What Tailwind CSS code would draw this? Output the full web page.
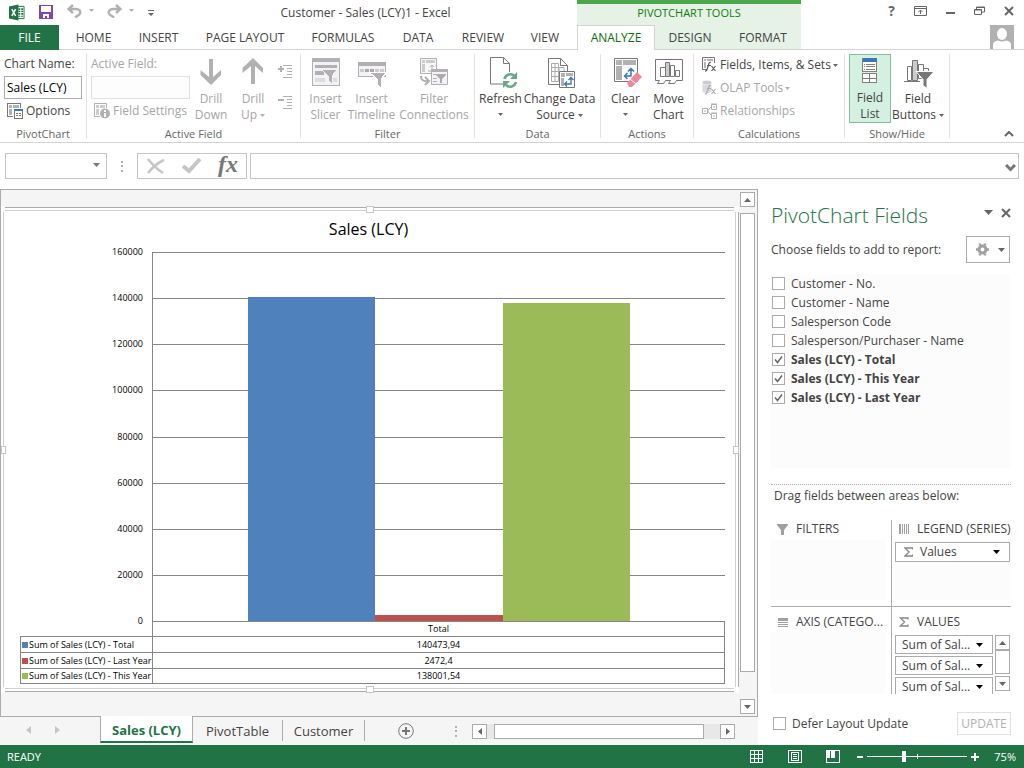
<!DOCTYPE html>
<html lang="en">
<head>
    <meta charset="UTF-8">
    <meta name="viewport" content="width=device-width, initial-scale=1.0">
    <title>Customer - Sales (LCY)1 - Excel</title>
    <script src="https://cdn.jsdelivr.net/npm/@tailwindcss/browser@4"></script>
</head>
<body class="flex h-screen min-h-[600px] flex-col overflow-hidden bg-white font-['Open_Sans','Noto_Sans',sans-serif] text-xs leading-4 text-[#444444]">

    <!-- Title bar and ribbon tabs -->
    <header class="flex h-[50px] shrink-0">
        <div class="flex flex-1 flex-col">
            <div class="flex h-[25px] items-center">
                <div class="flex w-[154px] items-center">
                    <svg class="ml-[9px]" width="17" height="17" viewBox="0 0 17 17">
                        <path d="M9 2h7v13H9z" fill="#fff" stroke="#217346"/>
                        <path d="M10 4h2v2h-2zM13 4h2v2h-2zM10 7h2v1h-2zM13 7h2v1h-2zM10 9h2v2h-2zM13 9h2v2h-2zM10 12h2v1h-2zM13 12h2v1h-2z" fill="#217346"/>
                        <path d="M0 2l10-2v17L0 15z" fill="#217346"/>
                        <path d="M3 5l4 7M7 5l-4 7" stroke="#fff" stroke-width="1.6"/>
                    </svg>
                    <button class="ml-[14px] pb-[2px]" aria-label="Save">
                        <svg class="block" width="14" height="14" viewBox="0 0 14 14" shape-rendering="crispEdges"><path d="M0 0h14v14H0z" fill="#8048a8"/><path d="M2 1h10v6H2zM4 9h6v4H8v-2H6v2H4z" fill="#fff"/></svg>
                    </button>
                    <button class="ml-[14px] flex items-center gap-[7px] pb-[4px]" aria-label="Undo">
                        <svg width="15" height="14" viewBox="0 0 15 14" fill="none" stroke="#b1b1b1" stroke-width="2.400"><path d="M6 1L1.500 5 6 9M2 5h7c3 0 5 2 4 4.500-1 2-3 2.500-5 4"/></svg>
                        <svg width="5" height="3"><path d="M0 0h5L2.500 3z" fill="#b1b1b1"/></svg>
                    </button>
                    <button class="ml-[13px] flex items-center gap-[7px] pb-[4px]" aria-label="Redo">
                        <svg width="15" height="14" viewBox="0 0 15 14" fill="none" stroke="#b1b1b1" stroke-width="2.400"><path d="M9 1l4.500 4L9 9M13 5H6C3 5 1 7 2 9.500c1 2 3 2.500 5 4"/></svg>
                        <svg width="5" height="3"><path d="M0 0h5L2.500 3z" fill="#b1b1b1"/></svg>
                    </button>
                    <button class="ml-[14px]" aria-label="Customize Quick Access Toolbar">
                        <svg class="block" width="6" height="6"><path d="M0 0h6v1H0zM0 3h6L3 6z" fill="#666"/></svg>
                    </button>
                </div>
                <h1 class="flex-1 text-center">Customer - Sales (LCY)1 - Excel</h1>
            </div>
            <nav class="flex h-[25px] items-center border-b border-[#d4d4d4]">
                <button class="h-[25px] w-[59px] bg-[#217346] pt-px text-white">FILE</button>
                <button class="w-[69px] pt-[2px]">HOME</button>
                <button class="w-[61px] pt-[2px]">INSERT</button>
                <button class="w-[112px] pt-[2px]">PAGE LAYOUT</button>
                <button class="w-[84px] pt-[2px]">FORMULAS</button>
                <button class="w-[66px] pt-[2px]">DATA</button>
                <button class="w-[64px] pt-[2px]">REVIEW</button>
                <button class="w-[60px] pt-[2px]">VIEW</button>
            </nav>
        </div>
        <div class="w-[224px] border-t-[4px] border-[#4ca64c] bg-[#e6f2e6]">
            <div class="flex h-[21px] items-center justify-center pb-[3px] text-[11px] text-[#0b7e0b]">PIVOTCHART TOOLS</div>
            <nav class="flex h-[25px] items-center">
                <button class="h-[25px] w-[78px] border-x border-t border-[#d4d4d4] bg-white text-[#0b6e0b]">ANALYZE</button>
                <div class="flex h-[25px] flex-1 border-b border-[#d4d4d4]">
                    <button class="w-[70px] pt-[2px]">DESIGN</button>
                    <button class="flex-1 pt-[2px]">FORMAT</button>
                </div>
            </nav>
        </div>
        <div class="flex w-[223px] flex-col border-b border-[#d4d4d4]">
            <div class="flex h-[25px] items-center justify-end gap-[19px] pr-[10px] pb-[3px]">
                <button class="text-sm font-bold text-[#666666]">?</button>
                <button aria-label="Ribbon display options"><svg class="block" width="13" height="10" viewBox="0 0 13 10" fill="none" stroke="#666"><path d="M.5.5h12v9H.5zM0 2.500h13M6.500 8V4.500M4.500 6l2-2 2 2"/></svg></button>
                <button aria-label="Minimize"><svg class="block" width="9" height="10"><path d="M0 6h9v2H0z" fill="#666"/></svg></button>
                <button aria-label="Restore"><svg class="block" width="11" height="10" viewBox="0 0 11 10" fill="none" stroke="#666"><path d="M.5 3.500h7v5h-7zM0 4h8M2.500 3V1h8v5H8M2.500 1.500h8"/></svg></button>
                <button aria-label="Close"><svg class="block" width="10" height="10" viewBox="0 0 10 10" stroke="#666" stroke-width="2"><path d="M1 1l8 8M9 1L1 9"/></svg></button>
            </div>
            <button class="mr-[10px] self-end" aria-label="Account">
                <svg width="24" height="24" viewBox="0 0 24 24"><path d="M0 0h24v24H0z" fill="#b1b1b1"/><ellipse cx="12" cy="9" rx="5" ry="6" fill="#fff"/><path d="M3 24v-4q0-4 5-4.500 4 2 8 0 5 .5 5 4.500v4z" fill="#fff"/></svg>
            </button>
        </div>
    </header>

    <!-- Ribbon -->
    <section class="flex h-[93px] shrink-0 border-b border-[#d4d4d4] pt-[4px] pb-[4px]">
        <div class="flex w-[87px] flex-col border-r border-[#e1e1e1]">
            <div class="flex flex-1 flex-col px-[4px]">
                <label for="chartName" class="pt-[2px]">Chart Name:</label>
                <input id="chartName" type="text" value="Sales (LCY)" class="mt-[4px] h-[23px] w-[78px] border border-[#ababab] px-[2px] text-black">
                <button class="mt-[4px] flex items-center gap-[3px] pl-[3px]">
                    <svg width="16" height="16" viewBox="0 0 16 16" shape-rendering="crispEdges"><path d="M.5 13.500V.5h13V5M0 13.500h6" fill="none" stroke="#777"/><path d="M2 2h3v3H2zM6 2h6v3H6zM2 6h3v6H2z" fill="#b1b1b1"/><path d="M7.500 6.500h8v9h-8z" fill="#fff" stroke="#777"/><path d="M7 6h9v2H7z" fill="#3a78b5"/><path d="M9 10h2v1H9zM12 10h2v1h-2zM9 12h2v1H9zM12 12h2v1h-2z" fill="#777"/></svg>
                    Options
                </button>
            </div>
            <div class="text-center text-[11px] leading-2 text-[#666666]">PivotChart</div>
        </div>

        <div class="flex w-[214px] flex-col border-r border-[#e1e1e1] text-[#a6a6a6]">
            <div class="flex flex-1">
                <div class="flex w-[103px] shrink-0 flex-col pl-[4px]">
                    <label for="activeField" class="pt-[2px]">Active Field:</label>
                    <input id="activeField" type="text" disabled class="mt-[4px] h-[23px] w-[99px] border border-[#e1e1e1] bg-[#fdfdfd]">
                    <button class="mt-[4px] flex items-center gap-[3px] pl-[3px] whitespace-nowrap">
                        <svg class="shrink-0" width="16" height="16" viewBox="0 0 16 16"><path d="M.5 13.500V.5h12V5M0 13.500h6" fill="none" stroke="#b1b1b1"/><path d="M2 2h3v3H2zM6 2h5v3H6zM2 6h3v6H2z" fill="#ccc"/><circle cx="11" cy="10.500" r="5" fill="#b1b1b1"/><path d="M10 7h2v2h-2zM10 10h2v4h-2z" fill="#fff"/></svg>
                        Field Settings
                    </button>
                </div>
                <button class="flex w-[42px] flex-col items-center pt-[3px]">
                    <svg width="32" height="32" viewBox="0 0 32 32"><path d="M14 2h4v18l8-7v5L16 28 5.500 18v-5l8.500 7z" fill="#b1b1b1"/></svg>
                    <span class="mt-[2px] text-center">Drill<br>Down</span>
                </button>
                <button class="flex w-[42px] flex-col items-center pt-[3px]">
                    <svg width="32" height="32" viewBox="0 0 32 32"><path d="M14 27h4V9l8 7v-5L16 1 5.500 11v5L14 9z" fill="#b1b1b1"/></svg>
                    <span class="mt-[2px] text-center">Drill<br>Up<svg class="ml-[3px] inline-block align-middle" width="5" height="3"><path d="M0 0h5L2.500 3z" fill="#b1b1b1"/></svg></span>
                </button>
                <div class="flex flex-col gap-[17px] pt-[11px] pl-[4px]">
                    <button aria-label="Expand Field"><svg class="block" width="15" height="14" viewBox="0 0 15 14" stroke="#b1b1b1" shape-rendering="crispEdges"><path d="M5 .5h9M9 3.500h5M9 6.500h5M9 9.500h5M5 12.500h9" stroke-width="1"/><path d="M0 4h6M3 1v6" stroke-width="2"/></svg></button>
                    <button aria-label="Collapse Field"><svg class="block" width="15" height="14" viewBox="0 0 15 14" stroke="#b1b1b1" shape-rendering="crispEdges"><path d="M5 .5h9M9 3.500h5M9 6.500h5M9 9.500h5M5 12.500h9"/><path d="M0 4h6" stroke-width="2"/></svg></button>
                </div>
            </div>
            <div class="text-center text-[11px] leading-2 text-[#666666]">Active Field</div>
        </div>

        <div class="flex w-[174px] flex-col border-r border-[#e1e1e1] text-[#a6a6a6]">
            <div class="flex flex-1">
                <button class="flex w-[47px] flex-col items-center pt-[3px] pl-[2px]">
                    <svg width="32" height="32" viewBox="0 0 32 32" shape-rendering="crispEdges"><path d="M2.500 1.500h27v27h-27z" fill="#f5f2f7" stroke="#b1b1b1"/><path d="M2 1h28v4H2z" fill="#b1b1b1"/><path d="M5 8h22v3H5zM5 14h9v4H5z" fill="#b1b1b1"/><path d="M5 21h10v4H5zM22 21h5v4h-5z" fill="#ddd"/><path d="M11 12h17l-6 7v8l-4-3v-5z" fill="#b1b1b1" stroke="#f5f2f7"/></svg>
                    <span class="mt-[2px] text-center">Insert<br>Slicer</span>
                </button>
                <button class="flex w-[47px] flex-col items-center pt-[3px]">
                    <svg width="32" height="32" viewBox="0 0 32 32" shape-rendering="crispEdges"><path d="M2.500 5.500h27v14h-27z" fill="#f5f2f7" stroke="#b1b1b1"/><path d="M2 5h28v4H2z" fill="#b1b1b1"/><path d="M4 12h4v3H4zM19 12h4v3h-4zM24 12h4v3h-4z" fill="#ccc"/><path d="M9 12h4v3H9zM14 12h4v3h-4z" fill="#aaa"/><path d="M13 15h18l-6 7v9l-4-3v-6z" fill="#b1b1b1" stroke="#fff"/></svg>
                    <span class="mt-[2px] text-center">Insert<br>Timeline</span>
                </button>
                <button class="flex w-[78px] flex-col items-center pt-[3px]">
                    <svg width="32" height="32" viewBox="0 0 32 32"><path d="M2.500 1.500h16v15h-16z" fill="#f8f6f9" stroke="#b1b1b1"/><path d="M4 3h3v3H4zM8 3h9v3H8zM4 7h3v8H4z" fill="#ccc"/><path d="M10 14h4V8M12 10l2-2 2 2" fill="none" stroke="#b1b1b1"/><path d="M13.500 12.500h16v15h-16z" fill="#f5f2f7" stroke="#b1b1b1"/><path d="M13 12h17v3H13zM15 17h13v1H15zM15 21h4v1h-4zM15 24h4v1h-4z" fill="#b1b1b1"/><path d="M18 18h10l-4 4v4h-2v-4z" fill="#aaa"/><path d="M3 19q0 6 7 5M7 20l4 4-4 4" fill="none" stroke="#b1b1b1" stroke-width="2"/></svg>
                    <span class="mt-[2px] text-center">Filter<br>Connections</span>
                </button>
            </div>
            <div class="text-center text-[11px] leading-2 text-[#666666]">Filter</div>
        </div>

        <div class="flex w-[126px] flex-col border-r border-[#e1e1e1]">
            <div class="flex flex-1 pl-[4px]">
                <button class="flex w-[43px] flex-col items-center pt-[3px]">
                    <svg width="32" height="32" viewBox="0 0 32 32"><path d="M5.500.5h13l6 6v20.500h-19z" fill="#fff" stroke="#777"/><path d="M18.500.5v6h6" fill="none" stroke="#777"/><circle cx="25" cy="23" r="8" fill="#fff"/><path d="M19.500 22a6 6 0 0 1 10-3M31 25a6 6 0 0 1-10 3" fill="none" stroke="#6aa88a" stroke-width="2.600"/><path d="M32 15v7h-7zM18 31v-7h7z" fill="#6aa88a"/></svg>
                    <span class="mt-[2px] flex flex-col items-center">Refresh<svg class="mt-[6px]" width="5" height="3"><path d="M0 0h5L2.500 3z" fill="#666"/></svg></span>
                </button>
                <button class="flex flex-1 flex-col items-center pt-[3px] pr-[3px]">
                    <svg width="32" height="32" viewBox="0 0 32 32"><path d="M4.500 1.500h12l7 7v19h-19z" fill="#fff" stroke="#777"/><path d="M16.500 1.500v7h7" fill="none" stroke="#777"/><path d="M7.500 6.500h7v18h-7zM11 6v18M15 10.500h5v14h-5zM7 10.500h13M7 14.500h13M7 19.500h13" fill="none" stroke="#aaa"/><path d="M15.500 14.500h15v16h-15z" fill="#fff" stroke="#777"/><path d="M17 16h4v4h-4zM22 16h7v3h-7zM17 21h3v8h-3z" fill="#b1b1b1"/><path d="M21 27h6v-6M23 24.500L20.500 27l2.500 2.500M24.500 23l2.500-2.500 2.500 2.500" fill="none" stroke="#3a78b5" stroke-width="1.300"/></svg>
                    <span class="mt-[2px] text-center whitespace-nowrap">Change Data<br>Source<svg class="ml-[3px] inline-block align-middle" width="5" height="3"><path d="M0 0h5L2.500 3z" fill="#666"/></svg></span>
                </button>
            </div>
            <div class="text-center text-[11px] leading-2 text-[#666666]">Data</div>
        </div>

        <div class="flex w-[93px] flex-col border-r border-[#e1e1e1]">
            <div class="flex flex-1 pl-[3px]">
                <button class="flex w-[43px] flex-col items-center pt-[3px]">
                    <svg width="32" height="32" viewBox="0 0 32 32"><path d="M4.500 1.500h23v23h-23z" fill="#fff" stroke="#777"/><path d="M6 3h6v5H6zM13 3h13v5H13zM6 9h6v14H6z" fill="#b1b1b1"/><path d="M15 19h6v-7M17.500 16L14.500 19l3 3M18 14.500l3-3 3 3" fill="none" stroke="#3a78b5" stroke-width="1.500"/><path d="M17 26L27 15l5 5-10 10h-3z" fill="#e88a9c"/><path d="M20 22l6 5" stroke="#fff"/></svg>
                    <span class="mt-[2px] flex flex-col items-center">Clear<svg class="mt-[6px]" width="5" height="3"><path d="M0 0h5L2.500 3z" fill="#666"/></svg></span>
                </button>
                <button class="flex w-[43px] flex-col items-center pt-[3px]">
                    <svg width="32" height="32" viewBox="0 0 32 32"><path d="M2.500 2.500h27v21h-6l-2 3h-6l2-3h-5l-2 3h-6l2-3h-4z" fill="#fff" stroke="#777"/><path d="M7.500 10.500h5v9h-5zM17.500 8.500h4v11h-4zM22.500 13.500h4v6h-4z" fill="#fff" stroke="#777"/><path d="M12.500 5.500h4v14h-4z" fill="#ccc" stroke="#777"/></svg>
                    <span class="mt-[2px] text-center">Move<br>Chart</span>
                </button>
            </div>
            <div class="text-center text-[11px] leading-2 text-[#666666]">Actions</div>
        </div>

        <div class="flex w-[151px] flex-col border-r border-[#e1e1e1]">
            <div class="flex flex-1 flex-col gap-[7px] pt-[3px] pl-[8px]">
                <button class="flex items-center gap-[2px] whitespace-nowrap">
                    <svg class="shrink-0" width="16" height="16" viewBox="0 0 16 16"><path d="M.5 12.500V.5h12V6M0 12.500h5" fill="none" stroke="#777"/><path d="M2 2h2v2H2zM5 2h6v2H5zM2 5h2v6H2z" fill="#b1b1b1"/><path d="M9 5.500c-2-1-2 1-3 4s-1 5-3 4.500M5 8.500h4M9.500 9l4 5M13.500 9l-4 5" fill="none" stroke="#555" stroke-width="1.200"/></svg>
                    Fields, Items, &amp; Sets<svg width="5" height="3"><path d="M0 0h5L2.500 3z" fill="#666"/></svg>
                </button>
                <button class="flex items-center gap-[2px] text-[#a6a6a6]">
                    <svg class="shrink-0" width="16" height="16" viewBox="0 0 16 16"><ellipse cx="5" cy="2.500" rx="4.500" ry="2" fill="#ccc"/><path d="M.5 4q4.500 2 9 0v8q-4.500 2-9 0z" fill="#ddd8e0"/><path d="M9 5.500c-2-1-2 1-3 4s-1 5-3 4.500M5 8.500h4M9.500 9l4 5M13.500 9l-4 5" fill="none" stroke="#aaa" stroke-width="1.200"/></svg>
                    OLAP Tools<svg width="5" height="3"><path d="M0 0h5L2.500 3z" fill="#b1b1b1"/></svg>
                </button>
                <button class="flex items-center gap-[2px] text-[#a6a6a6]">
                    <svg class="shrink-0" width="16" height="16" viewBox="0 0 16 16" fill="none" stroke="#b1b1b1"><path d="M.5 5.500h5v5h-5zM9.500 1.500h5v5h-5zM9.500 10.500h5v5h-5zM5.500 8L9 4M5.500 8L9 12M2 8h2M11 4h2M11 13h2M9 1h6M9 10h6"/></svg>
                    Relationships
                </button>
            </div>
            <div class="text-center text-[11px] leading-2 text-[#666666]">Calculations</div>
        </div>

        <div class="flex w-[105px] flex-col border-r border-[#e1e1e1]">
            <div class="flex flex-1 pl-[4px]">
                <button class="flex h-[69px] w-[42px] shrink-0 flex-col items-center border border-[#86bfa0] bg-[#d3f0e0] pt-[2px]">
                    <svg width="32" height="32" viewBox="0 0 32 32" shape-rendering="crispEdges"><path d="M8.500 1.500h14v14h-14z" fill="#fff" stroke="#777"/><path d="M8 1h15v4H8z" fill="#3a78b5"/><path d="M10 7.500h1M12 7.500h9M10 10.500h1M12 10.500h9M10 13.500h1M12 13.500h9" stroke="#777"/><path d="M8.500 17.500h7v5h-7zM15.500 17.500h7v5h-7zM8.500 22.500h7v5h-7zM15.500 22.500h7v5h-7z" fill="#fff" stroke="#777"/></svg>
                    <span class="mt-[3px] text-center">Field<br>List</span>
                </button>
                <button class="flex flex-1 flex-col items-center pt-[3px] pr-[4px]">
                    <svg width="32" height="32" viewBox="0 0 32 32"><path d="M5.500 9.500h4v14h-4zM16.500 7.500h5v14h-5zM21.500 11.500h5v8h-5z" fill="#fff" stroke="#777"/><path d="M10.500 3.500h5v20h-5z" fill="#ccc" stroke="#777"/><path d="M2 24.500h16" stroke="#777"/><path d="M14 14.500h18l-7 8v9l-4-3v-6z" fill="#777" stroke="#fff"/></svg>
                    <span class="mt-[2px] text-center whitespace-nowrap">Field<br>Buttons<svg class="ml-[3px] inline-block align-middle" width="5" height="3"><path d="M0 0h5L2.500 3z" fill="#666"/></svg></span>
                </button>
            </div>
            <div class="text-center text-[11px] leading-2 text-[#666666]">Show/Hide</div>
        </div>
        <div class="flex flex-1 items-end justify-end pr-[10px] pb-[1px]">
            <button aria-label="Collapse the Ribbon"><svg class="block" width="10" height="6" viewBox="0 0 10 6" fill="none" stroke="#666" stroke-width="2"><path d="M1 5l4-4 4 4"/></svg></button>
        </div>
    </section>

    <!-- Formula bar -->
    <section class="flex h-[46px] shrink-0 items-start pt-[10px] pr-[5px] pl-[5px]">
        <div class="relative">
            <select aria-label="Name Box" class="block h-[26px] w-[102px] appearance-none border border-[#c6c6c6] bg-white"><option></option></select>
            <svg class="pointer-events-none absolute top-[10px] right-[7px]" width="7" height="4"><path d="M0 0h7L3.500 4z" fill="#777"/></svg>
        </div>
        <div class="flex h-[26px] w-[30px] items-center justify-center"><svg width="2" height="11"><path d="M0 0h2v2H0zM0 4h2v2H0zM0 9h2v2H0z" fill="#b1b1b1"/></svg></div>
        <div class="flex h-[26px] w-[110px] items-center justify-between border border-[#c6c6c6] pr-[8px] pl-[9px]">
            <button aria-label="Cancel"><svg class="block" width="18" height="17" viewBox="0 0 18 17" fill="none" stroke="#c6c6c6" stroke-width="2.500"><path d="M1 1q6 8 15 14M17 2Q8 6 1 15"/></svg></button>
            <button aria-label="Enter"><svg class="block" width="19" height="16" viewBox="0 0 19 16" fill="none" stroke="#c6c6c6" stroke-width="4"><path d="M1 8l6 5L18 1"/></svg></button>
            <button class="pb-[5px] font-['Liberation_Serif',serif] text-2xl leading-5 font-bold text-[#777777] italic" aria-label="Insert Function">fx</button>
        </div>
        <div class="relative ml-[3px] flex-1">
            <input type="text" aria-label="Formula Bar" class="block h-[26px] w-full border border-[#c6c6c6] px-2">
            <svg class="pointer-events-none absolute top-[11px] right-[3px]" width="11" height="8" viewBox="0 0 11 8" fill="none" stroke="#777" stroke-width="3"><path d="M1 1l4.500 4.500L10 1"/></svg>
        </div>
    </section>

    <main class="flex min-h-0 flex-1">
        <!-- Worksheet -->
        <div class="flex min-w-0 flex-1 flex-col bg-[#f5f5f5]">
            <div class="flex min-h-0 flex-1 border border-[#ababab]">
                <div class="flex min-w-0 flex-1 flex-col pt-[17px] pb-[24px]">
                    <div class="relative flex flex-1 border-y border-r border-[#ababab] bg-white p-[2px]">
                        <div class="flex flex-1 flex-col border border-[#d0d0d0] pr-[10px] pb-[4px] pl-[16px] text-[9px] text-black">
                            <h2 class="pt-[8px] pr-[8px] text-center text-base leading-5">Sales (LCY)</h2>
                            <div class="mt-[13px] flex flex-1">
                                <div class="flex w-[132px] shrink-0 flex-col justify-between pr-[9px] text-right">
                                    <span class="flex h-0 items-center justify-end">160000</span>
                                    <span class="flex h-0 items-center justify-end">140000</span>
                                    <span class="flex h-0 items-center justify-end">120000</span>
                                    <span class="flex h-0 items-center justify-end">100000</span>
                                    <span class="flex h-0 items-center justify-end">80000</span>
                                    <span class="flex h-0 items-center justify-end">60000</span>
                                    <span class="flex h-0 items-center justify-end">40000</span>
                                    <span class="flex h-0 items-center justify-end">20000</span>
                                    <span class="flex h-0 items-center justify-end">0</span>
                                </div>
                                <div class="grid flex-1 grid-cols-1 grid-rows-1 border-l border-[#868686]">
                                    <div class="col-start-1 row-start-1 grid grid-rows-8">
                                        <div class="border-t border-[#868686]"></div>
                                        <div class="border-t border-[#868686]"></div>
                                        <div class="border-t border-[#868686]"></div>
                                        <div class="border-t border-[#868686]"></div>
                                        <div class="border-t border-[#868686]"></div>
                                        <div class="border-t border-[#868686]"></div>
                                        <div class="border-t border-[#868686]"></div>
                                        <div class="border-t border-[#868686]"></div>
                                    </div>
                                    <!-- bar heights are value / 160000 -->
                                    <div class="z-10 col-start-1 row-start-1 flex items-end px-[95px]">
                                        <div class="flex-1 bg-[#4f81bd]" style="height: 87.8%"></div>
                                        <div class="flex-1 bg-[#c0504d]" style="height: 1.55%"></div>
                                        <div class="flex-1 bg-[#9bbb59]" style="height: 86.25%"></div>
                                    </div>
                                </div>
                            </div>
                            <table class="w-full table-fixed border-collapse">
                                <colgroup><col class="w-[132px]"><col></colgroup>
                                <thead>
                                    <tr><td class="h-[15px] p-0"></td><th class="h-[15px] border border-[#868686] p-0 leading-[14px] font-normal">Total</th></tr>
                                </thead>
                                <tbody>
                                    <tr><th class="border border-[#868686] p-0 leading-[15px] font-normal"><span class="flex items-center gap-px pl-px whitespace-nowrap"><span class="size-[6px] shrink-0 bg-[#4f81bd]"></span>Sum of Sales (LCY) - Total</span></th><td class="border border-[#868686] p-0 text-center leading-[15px]">140473,94</td></tr>
                                    <tr><th class="border border-[#868686] p-0 leading-[15px] font-normal"><span class="flex items-center gap-px pl-px whitespace-nowrap"><span class="size-[6px] shrink-0 bg-[#c0504d]"></span>Sum of Sales (LCY) - Last Year</span></th><td class="border border-[#868686] p-0 text-center leading-[15px]">2472,4</td></tr>
                                    <tr><th class="border border-[#868686] p-0 leading-[14px] font-normal"><span class="flex items-center gap-px pl-px whitespace-nowrap"><span class="size-[6px] shrink-0 bg-[#9bbb59]"></span>Sum of Sales (LCY) - This Year</span></th><td class="border border-[#868686] p-0 text-center leading-[14px]">138001,54</td></tr>
                                </tbody>
                            </table>
                        </div>
                        <!-- selection handles -->
                        <span class="absolute -top-[2px] left-1/2 h-[7px] w-[8px] -translate-x-1/2 border border-[#c6c6c6] bg-white"></span>
                        <span class="absolute -bottom-[2px] left-1/2 h-[7px] w-[8px] -translate-x-1/2 border border-[#c6c6c6] bg-white"></span>
                        <span class="absolute top-1/2 left-0 h-[8px] w-[5px] -translate-y-1/2 border border-[#c6c6c6] bg-white"></span>
                        <span class="absolute top-1/2 -right-[1px] h-[8px] w-[6px] -translate-y-1/2 border border-[#c6c6c6] bg-white"></span>
                        <span class="absolute -top-[2px] left-0 h-[6px] w-[4px] bg-white"></span>
                        <span class="absolute -top-[2px] -right-[1px] h-[6px] w-[5px] bg-white"></span>
                        <span class="absolute -bottom-[2px] left-0 h-[6px] w-[4px] bg-white"></span>
                        <span class="absolute -right-[1px] -bottom-[2px] h-[6px] w-[5px] bg-white"></span>
                    </div>
                </div>
                <div class="flex w-[18px] shrink-0 flex-col items-start py-[2px] pl-px">
                    <button class="flex size-[15px] items-center justify-center border border-[#ababab] bg-white" aria-label="Scroll up"><svg width="7" height="4"><path d="M0 4h7L3.500 0z" fill="#666"/></svg></button>
                    <div class="flex w-[15px] flex-1 flex-col pt-[6px] pb-[27px]"><div class="flex-1 border border-[#ababab] bg-white"></div></div>
                    <button class="flex size-[15px] items-center justify-center border border-[#ababab] bg-white" aria-label="Scroll down"><svg width="7" height="4"><path d="M0 0h7L3.500 4z" fill="#666"/></svg></button>
                </div>
            </div>

            <!-- Sheet tabs -->
            <div class="flex h-[28px] shrink-0 items-start pr-[23px]">
                <div class="flex h-[26px] w-[100px] items-center gap-[24px] pl-[26px]">
                    <button aria-label="Previous sheet"><svg class="block" width="5" height="8"><path d="M5 0v8L0 4z" fill="#c6c6c6"/></svg></button>
                    <button aria-label="Next sheet"><svg class="block" width="5" height="8"><path d="M0 0v8l5-4z" fill="#c6c6c6"/></svg></button>
                </div>
                <button class="-mt-px h-[27px] w-[93px] border-x border-b-2 border-x-[#ababab] border-b-[#217346] bg-white pt-[2px] text-[13px] font-bold text-[#217346]">Sales (LCY)</button>
                <button class="mt-[3px] h-[21px] w-[90px] border-r border-[#ababab] text-[13px]">PivotTable</button>
                <button class="mt-[3px] h-[21px] w-[82px] border-r border-[#ababab] text-[13px]">Customer</button>
                <button class="mt-[6px] ml-[33px]" aria-label="New sheet"><svg class="block" width="16" height="16" viewBox="0 0 16 16" fill="none" stroke="#777"><circle cx="8" cy="8" r="7.300"/><path d="M4 8h8M8 4v8" stroke-width="2"/></svg></button>
                <div class="flex-1"></div>
                <svg class="mt-[9px] mr-[15px]" width="2" height="11"><path d="M0 0h2v2H0zM0 4h2v2H0zM0 9h2v2H0z" fill="#b1b1b1"/></svg>
                <div class="mt-[7px] flex w-[263px] bg-[#e8e8e8]">
                    <button class="flex size-[15px] items-center justify-center border border-[#ababab] bg-white" aria-label="Scroll left"><svg width="4" height="7"><path d="M4 0v7L0 3.500z" fill="#666"/></svg></button>
                    <div class="mr-[16px] ml-[7px] flex-1 border border-[#ababab] bg-white"></div>
                    <button class="flex size-[15px] items-center justify-center border border-[#ababab] bg-white" aria-label="Scroll right"><svg width="4" height="7"><path d="M0 0v7l4-3.500z" fill="#666"/></svg></button>
                </div>
            </div>
        </div>

        <!-- PivotChart Fields pane -->
        <aside class="flex w-[266px] shrink-0 flex-col pt-[12px] pr-[13px] pb-[10px] pl-[13px]">
            <div class="flex h-[28px] items-center">
                <h2 class="flex-1 text-[21px] leading-7 font-light whitespace-nowrap text-[#217346]">PivotChart Fields</h2>
                <button class="mb-[5px]" aria-label="Pane options"><svg class="block" width="9" height="5"><path d="M0 0h9L4.500 5z" fill="#666"/></svg></button>
                <button class="mb-[5px] ml-[8px]" aria-label="Close pane"><svg class="block" width="10" height="10" viewBox="0 0 10 10" stroke="#666" stroke-width="2"><path d="M1 1l8 8M9 1L1 9"/></svg></button>
            </div>
            <div class="mt-[7px] flex items-center justify-between pr-px">
                <span>Choose fields to add to report:</span>
                <button class="flex h-[27px] w-[44px] items-center justify-end gap-[9px] border border-[#ababab] pr-[4px]" aria-label="Tools">
                    <svg width="13" height="13" viewBox="0 0 13 13"><circle cx="6.500" cy="6.500" r="3.500" fill="none" stroke="#a0a0a0" stroke-width="3"/><path d="M4 2.500V.5M9 2.500V.5M4 12.500v-2M9 12.500v-2M0 6.500h2M11 6.500h2" stroke="#a0a0a0" stroke-width="2.600"/></svg>
                    <svg width="7" height="4"><path d="M0 0h7L3.500 4z" fill="#666"/></svg>
                </button>
            </div>
            <div id="fieldList" class="mt-[11px] mr-px min-h-0 flex-1 bg-[#fcfcfc]"></div>

            <div class="mt-[16px] border-t border-dotted border-[#ababab]"></div>
            <div class="mt-[3px] pl-[3px]">Drag fields between areas below:</div>

            <div class="mt-[16px] grid h-[174px] shrink-0 grid-cols-[121px_1fr] grid-rows-2">
                <div class="flex min-w-0 flex-col border-r border-b border-[#ababab] pr-[6px] pb-[6px]">
                    <div class="flex h-[18px] items-center gap-[8px] pl-[6px]"><svg width="11" height="11"><path d="M0 0h11v1L7 6v5H4V6L0 1z" fill="#a0a0a0"/></svg>FILTERS</div>
                    <div class="mt-[2px] flex-1 bg-[#fcfcfc]"></div>
                </div>
                <div class="flex min-w-0 flex-col border-b border-[#ababab] pb-[6px] pl-[3px]">
                    <div class="flex h-[18px] items-center gap-[8px] pl-[4px] whitespace-nowrap"><svg class="shrink-0" width="10" height="10"><path d="M0 0h2v10H0zM3 0h1v10H3zM5 0h1v10H5zM7 0h1v10H7zM9 0h1v10H9z" fill="#a0a0a0"/></svg>LEGEND (SERIES)</div>
                    <div class="mt-[2px] flex-1 bg-[#fcfcfc] pt-[2px]">
                        <button class="flex h-[20px] w-[115px] items-center border border-[#ababab] bg-white pr-[9px] pl-[8px]">
                            <svg width="9" height="10" viewBox="0 0 9 10" fill="none" stroke="#888" stroke-width="1.300"><path d="M8.500 2.500V1H1l4 4-4 4h7.500V7.500"/></svg>
                            <span class="ml-[7px] flex-1 text-left">Values</span>
                            <svg width="7" height="4"><path d="M0 0h7L3.500 4z" fill="#000"/></svg>
                        </button>
                    </div>
                </div>
                <div class="flex min-w-0 flex-col border-r border-[#ababab] pt-[5px] pr-[6px]">
                    <div class="flex h-[20px] items-center gap-[8px] pl-[7px]"><svg class="shrink-0" width="10" height="9"><path d="M0 0h10v3H0zM0 4h10v1H0zM0 6h10v1H0zM0 8h10v1H0z" fill="#a0a0a0"/></svg><span class="whitespace-nowrap">AXIS (CATEGO...</span></div>
                    <div class="flex-1 bg-[#fcfcfc]"></div>
                </div>
                <div class="flex min-h-0 min-w-0 flex-col pt-[5px] pl-[3px]">
                    <div class="flex h-[20px] shrink-0 items-center gap-[8px] pl-[4px]"><svg width="10" height="10" viewBox="0 0 9 10" fill="none" stroke="#888" stroke-width="1.300"><path d="M8.500 2.500V1H1l4 4-4 4h7.500V7.500"/></svg>VALUES</div>
                    <div class="mt-[3px] flex min-h-0 flex-1 gap-[2px] overflow-hidden">
                        <div class="flex w-[98px] flex-col gap-[2px]">
                            <button class="flex h-[19px] shrink-0 items-center border border-[#ababab] bg-white pr-[9px] pl-[6px]"><span class="flex-1 text-left whitespace-nowrap">Sum of Sal...</span><svg width="7" height="4"><path d="M0 0h7L3.500 4z" fill="#000"/></svg></button>
                            <button class="flex h-[19px] shrink-0 items-center border border-[#ababab] bg-white pr-[9px] pl-[6px]"><span class="flex-1 text-left whitespace-nowrap">Sum of Sal...</span><svg width="7" height="4"><path d="M0 0h7L3.500 4z" fill="#000"/></svg></button>
                            <button class="flex h-[19px] shrink-0 items-center border border-[#ababab] bg-white pr-[9px] pl-[6px]"><span class="flex-1 text-left whitespace-nowrap">Sum of Sal...</span><svg width="7" height="4"><path d="M0 0h7L3.500 4z" fill="#000"/></svg></button>
                        </div>
                        <div class="flex w-[15px] flex-col">
                            <button class="flex size-[15px] items-center justify-center border border-[#ababab] bg-white" aria-label="Scroll up"><svg width="7" height="4"><path d="M0 4h7L3.500 0z" fill="#666"/></svg></button>
                            <div class="h-[24px] border border-[#ababab] bg-white"></div>
                            <button class="mt-[2px] flex size-[15px] items-center justify-center border border-[#ababab] bg-white" aria-label="Scroll down"><svg width="7" height="4"><path d="M0 0h7L3.500 4z" fill="#666"/></svg></button>
                        </div>
                    </div>
                </div>
            </div>

            <div class="mt-[18px] flex items-center justify-between">
                <label class="flex items-center gap-[6px] pl-[2px]"><input type="checkbox" class="size-[13px] appearance-none border border-[#ababab]">Defer Layout Update</label>
                <button disabled class="h-[23px] w-[54px] border border-[#e1e1e1] text-[#b1b1b1]">UPDATE</button>
            </div>
        </aside>
    </main>

    <!-- Status bar -->
    <footer class="flex h-[23px] shrink-0 items-center bg-[#217346] pr-[8px] pl-[7px] text-[11px] text-white">
        <span class="flex-1">READY</span>
        <button aria-label="Normal"><svg class="block" width="13" height="13" viewBox="0 0 13 13" fill="none" stroke="#fff" shape-rendering="crispEdges"><path d="M.5.500h12v12H.5zM4.500 0v13M8.500 0v13M0 4.500h13M0 8.500h13"/></svg></button>
        <button class="ml-[25px]" aria-label="Page Layout"><svg class="block" width="14" height="13" viewBox="0 0 14 13" fill="none" stroke="#fff" shape-rendering="crispEdges"><path d="M.5.500h13v12H.5zM3.500 2.500h7v8h-7zM5 4.500h4M5 6.500h4M5 8.500h4"/></svg></button>
        <button class="ml-[24px]" aria-label="Page Break Preview"><svg class="block" width="14" height="13" viewBox="0 0 14 13" shape-rendering="crispEdges"><path d="M.5.500h13v12H.5z" fill="none" stroke="#fff"/><path d="M0 0h4v8H0zM5 0h4v8H5z" fill="#fff"/></svg></button>
        <button class="ml-[17px]" aria-label="Zoom out"><svg class="block" width="6" height="2"><path d="M0 0h6v2H0z" fill="#fff"/></svg></button>
        <div class="relative ml-[4px] flex h-[23px] items-center">
            <input type="range" min="0" max="200" value="73" aria-label="Zoom" class="h-px w-[100px] appearance-none bg-white [&::-webkit-slider-thumb]:h-[11px] [&::-webkit-slider-thumb]:w-[4px] [&::-webkit-slider-thumb]:appearance-none [&::-webkit-slider-thumb]:bg-white">
            <span class="absolute left-1/2 h-[5px] w-px bg-white"></span>
        </div>
        <button class="ml-[4px]" aria-label="Zoom in"><svg class="block" width="8" height="8"><path d="M0 3h8v2H0zM3 0h2v8H3z" fill="#fff"/></svg></button>
        <span class="ml-[15px] w-[22px] text-right">75%</span>
    </footer>

    <script>
        const fields = [
            ['Customer - No.', false],
            ['Customer - Name', false],
            ['Salesperson Code', false],
            ['Salesperson/Purchaser - Name', false],
            ['Sales (LCY) - Total', true],
            ['Sales (LCY) - This Year', true],
            ['Sales (LCY) - Last Year', true],
        ];

        document.getElementById('fieldList').innerHTML = fields.map(([name, checked]) => `
            <label class="relative flex h-[19px] items-center gap-[6px] pl-px whitespace-nowrap has-checked:font-bold">
                <input type="checkbox" class="peer size-[13px] appearance-none border border-[#ababab] bg-white" ${checked ? 'checked' : ''}>
                <svg class="pointer-events-none absolute top-[5px] left-[3px] hidden peer-checked:block" width="9" height="9" viewBox="0 0 9 9" fill="none" stroke="#666" stroke-width="1.500"><path d="M1 4.500l2.500 3L8 1.500"/></svg>
                ${name}
            </label>`).join('');
    </script>
</body>
</html>
